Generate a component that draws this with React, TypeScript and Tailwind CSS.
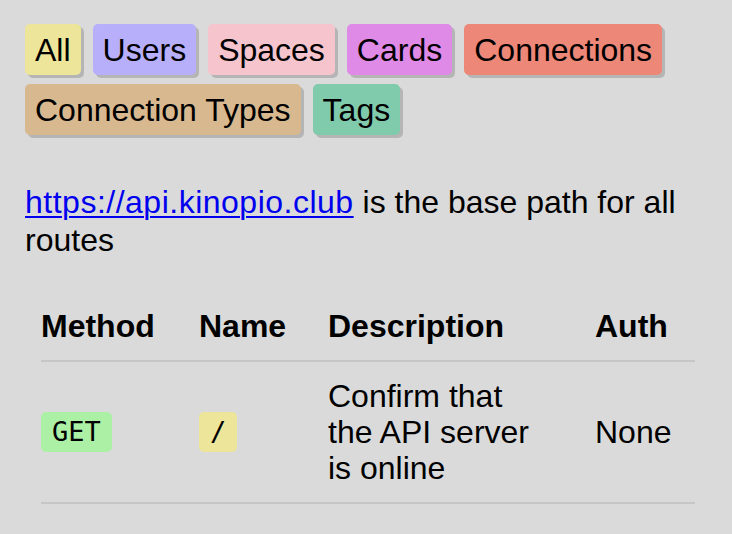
const tags = [
  { label: "All", color: "bg-[#ede599]" },
  { label: "Users", color: "bg-[#b8affa]" },
  { label: "Spaces", color: "bg-[#f6c4cc]" },
  { label: "Cards", color: "bg-[#e08ae7]" },
  { label: "Connections", color: "bg-[#ed8777]" },
  { label: "Connection Types", color: "bg-[#d8b98f]" },
  { label: "Tags", color: "bg-[#80cbab]" },
];

const routes = [
  {
    method: "GET",
    name: "/",
    description: "Confirm that the API server is online",
    auth: "None",
  },
];

const App = () => {
  return (
    <div className="min-h-screen bg-[#dadada] pl-[25px] pr-[37px] pt-[24px] font-['Liberation_Sans',Arial,sans-serif] text-[32px] text-black">
      {/* filter tags */}
      <div className="flex flex-wrap gap-x-3 gap-y-[9px]">
        {tags.map((tag) => (
          <button
            key={tag.label}
            className={`${tag.color} rounded-[5px] px-[10px] pt-[8px] pb-[6px] leading-[37px] shadow-[3px_3px_0_rgba(0,0,0,0.17)]`}
          >
            {tag.label}
          </button>
        ))}
      </div>

      <p className="mt-[48px] leading-[38px]">
        <a href="#" className="text-[#0000ee] tracking-[0.5px] underline decoration-2 underline-offset-[3px]">
          https://api.kinopio.club
        </a>{" "}
        is the base path for all routes
      </p>

      {/* routes table */}
      <table className="ml-4 mt-[33px] w-[654px] table-fixed border-collapse text-left leading-[36px]">
        <colgroup>
          <col className="w-[158px]" />
          <col className="w-[129px]" />
          <col className="w-[267px]" />
          <col className="w-[100px]" />
        </colgroup>
        <thead>
          <tr className="border-b-2 border-[#c6c6c6]">
            <th className="py-4 font-bold">Method</th>
            <th className="py-4 font-bold">Name</th>
            <th className="py-4 font-bold">Description</th>
            <th className="py-4 font-bold">Auth</th>
          </tr>
        </thead>
        <tbody>
          {routes.map((route) => (
            <tr key={route.name} className="border-b-2 border-[#c6c6c6]">
              <td className="py-4 align-middle">
                <code className="inline-block rounded-[5px] bg-[#abf0a5] px-[11px] font-['DejaVu_Sans_Mono',monospace] text-[27px] leading-[40px]">
                  {route.method}
                </code>
              </td>
              <td className="py-4 align-middle">
                <code className="inline-block rounded-[5px] bg-[#ede599] px-[11px] font-['DejaVu_Sans_Mono',monospace] text-[27px] leading-[40px]">
                  {route.name}
                </code>
              </td>
              <td className="py-4 pr-12 align-middle">{route.description}</td>
              <td className="py-4 align-middle">{route.auth}</td>
            </tr>
          ))}
        </tbody>
      </table>
    </div>
  );
};

export default App;
